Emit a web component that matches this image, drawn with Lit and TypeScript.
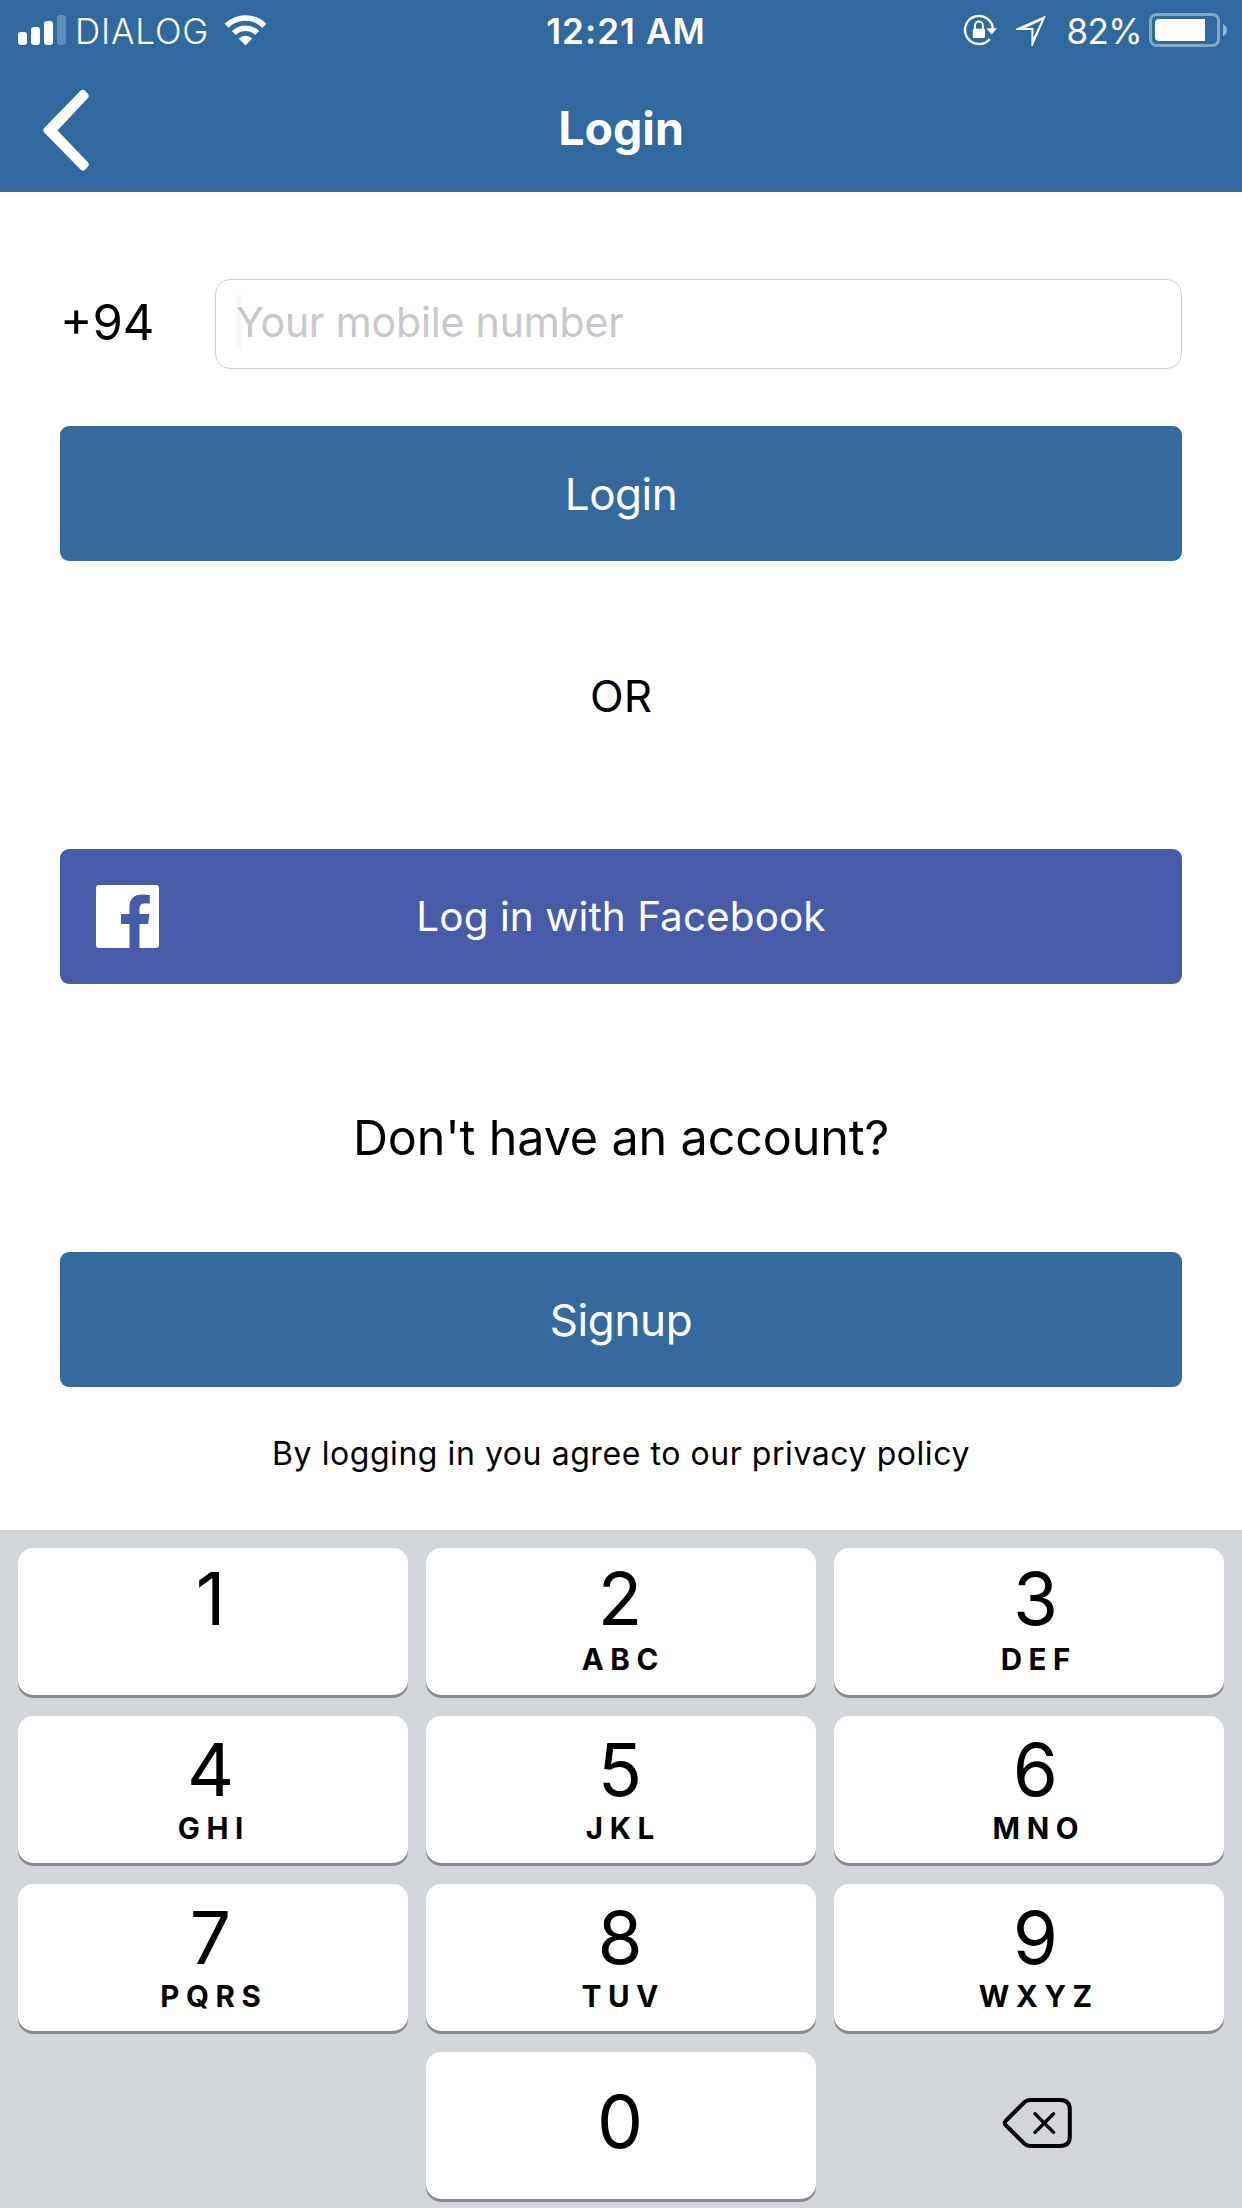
import { LitElement, html, css, svg, nothing } from "lit";
import { customElement } from "lit/decorators.js";

interface Key {
  digit: string;
  letters: string;
}

const KEYS: Key[] = [
  { digit: "1", letters: "" },
  { digit: "2", letters: "ABC" },
  { digit: "3", letters: "DEF" },
  { digit: "4", letters: "GHI" },
  { digit: "5", letters: "JKL" },
  { digit: "6", letters: "MNO" },
  { digit: "7", letters: "PQRS" },
  { digit: "8", letters: "TUV" },
  { digit: "9", letters: "WXYZ" },
];

@customElement("status-bar")
class StatusBar extends LitElement {
  static styles = css`
    :host { display: block; height: 63px; color: #fff; font-size: 35px; line-height: 63px; }
    .bar { display: grid; grid-template-columns: 1fr auto 1fr; height: 63px; }
    .side { display: flex; align-items: flex-start; }
    .left { padding-left: 18px; }
    .right { justify-content: flex-end; padding-right: 15px; }
    .signal { margin-top: 15px; margin-right: 9px; }
    .carrier { font-weight: 300; letter-spacing: 0.8px; }
    .wifi { margin-top: 14px; margin-left: 15px; }
    .time { font-weight: 600; letter-spacing: 1.1px; margin-left: 10px; }
    .lock { margin-top: 14px; margin-right: 18px; }
    .arrow { margin-top: 15px; margin-right: 19px; }
    .percent { letter-spacing: -0.6px; }
    .battery { margin-top: 13px; margin-left: 7px; }
    svg { display: block; flex: none; }
  `;

  render() {
    return html`
      <div class="bar">
        <div class="side left">
          <svg class="signal" width="48" height="30" viewBox="0 0 48 30" fill="#fff">
            <rect x="0" y="17" width="9" height="13" rx="3" />
            <rect x="13" y="12" width="9" height="18" rx="3" />
            <rect x="26" y="6" width="9" height="24" rx="3" />
            <rect x="39" y="0" width="9" height="30" rx="3" fill="#6090b9" />
          </svg>
          <span class="carrier">DIALOG</span>
          <svg class="wifi" width="43" height="32" viewBox="0 0 43 32">
            <g fill="none" stroke="#fff" stroke-width="5.6">
              <path d="M2.6 11.7A27 27 0 0 1 40.4 11.7" />
              <path d="M9.8 19A16.6 16.6 0 0 1 33.2 19" />
            </g>
            <path d="M14.7 24.6Q21.5 18.9 28.3 24.6L21.5 31.4Z" fill="#fff" />
          </svg>
        </div>
        <span class="time">12:21 AM</span>
        <div class="side right">
          <svg class="lock" width="35" height="32" viewBox="0 0 35 32">
            <path d="M30 16.5A14 14 0 1 0 26.8 24.9" fill="none" stroke="#fff" stroke-width="2.3" />
            <path d="M23.4 14.2H34L28.7 20.6Z" fill="#fff" />
            <rect x="9.8" y="14.8" width="12.2" height="9.2" rx="1.2" fill="#fff" />
            <path d="M11.9 15.5V11.6a4 4 0 0 1 8 0V15.5" fill="none" stroke="#fff" stroke-width="2" />
          </svg>
          <svg class="arrow" width="31" height="32" viewBox="0 0 31 32">
            <path d="M0 13.8L30 .6L16.6 31H15.4V15L0 14.9ZM9.2 13H17.4V23.2L25.8 5.2Z" fill="#fff" fill-rule="evenodd" />
          </svg>
          <span class="percent">82%</span>
          <svg class="battery" width="78" height="34" viewBox="0 0 78 34">
            <rect x="1.5" y="1.5" width="68" height="31" rx="6" fill="none" stroke="#82a8c8" stroke-width="3" />
            <path d="M10 6H56V28H10Q6 28 6 24V10Q6 6 10 6Z" fill="#fff" />
            <path d="M74 11Q78 13 78 17T74 23Z" fill="#97b5d0" />
          </svg>
        </div>
      </div>
    `;
  }
}

@customElement("number-pad")
class NumberPad extends LitElement {
  static styles = css`
    :host { display: block; height: 678px; background: #d2d5da; color: #000; }
    .pad { display: grid; grid-template-columns: repeat(3, 390px); grid-auto-rows: 147px; gap: 21px 18px; padding: 18px; }
    .key { display: flex; flex-direction: column; align-items: center; border-radius: 15px; background: #fff; box-shadow: 0 3px 0 #898a8f; box-sizing: border-box; padding: 16px 2px 0 0; }
    .col-0 { padding-right: 5px; }
    .col-2 { padding-right: 0; padding-left: 13px; }
    .first { padding-top: 13px; }
    .zero { grid-column: 2; padding-top: 32px; }
    .digit { font-size: 73px; line-height: 75px; height: 75px; }
    .letters { font-size: 29.5px; line-height: 36px; font-weight: 700; letter-spacing: 6.6px; margin-right: -6.6px; margin-top: 3px; }
    .first .letters { margin-top: 5px; }
    .delete { display: flex; align-items: center; justify-content: center; padding-left: 15px; padding-bottom: 6px; }
  `;

  private key(k: Key, index: number) {
    return html`
      <div class="key col-${index % 3} ${index < 3 ? "first" : ""}">
        <span class="digit">${k.digit}</span>
        ${k.letters ? html`<span class="letters">${k.letters}</span>` : nothing}
      </div>
    `;
  }

  render() {
    return html`
      <div class="pad">
        ${KEYS.map((k, i) => this.key(k, i))}
        <div class="key zero"><span class="digit">0</span></div>
        <div class="delete">
          <svg width="70" height="52" viewBox="0 0 70 52" fill="none" stroke="#000" stroke-linejoin="round" stroke-linecap="round">
            <path d="M28 3H58Q67.8 3 67.8 12.5V39.5Q67.8 49 58 49H28Q24.8 49 22.5 46.8L3.6 28Q1.8 26 3.6 24L22.5 5.2Q24.8 3 28 3Z" stroke-width="4" />
            <path d="M33 16.8L51.6 35.4M51.6 16.8L33 35.4" stroke-width="3.4" />
          </svg>
        </div>
      </div>
    `;
  }
}

@customElement("app-root")
class AppRoot extends LitElement {
  static styles = css`
    :host { display: block; width: 1242px; height: 2208px; overflow: hidden; background: #fff; color: #000; font-family: Inter, "Liberation Sans", sans-serif; }
    .header { height: 192px; background: #30699f; }
    .nav { display: grid; grid-template-columns: 1fr auto 1fr; height: 129px; color: #fff; }
    .back { display: block; margin-left: 42px; margin-top: 26px; }
    .title { font-size: 46.5px; font-weight: 700; line-height: 56px; margin-top: 37px; }
    .form { display: flex; flex-direction: column; height: 1338px; padding: 87px 60px 0; box-sizing: border-box; }
    .phone { display: flex; height: 90px; }
    .code { width: 155px; box-sizing: border-box; font-size: 49px; line-height: 88px; }
    .field { flex: 1; display: flex; box-sizing: border-box; border: 1px solid #ccc; border-radius: 15px; padding-left: 20px; }
    .cursor { width: 6px; height: 56px; margin-top: 14px; border-radius: 3px; background: #f7f9fe; }
    .placeholder { margin-left: -6px; font-size: 41px; line-height: 85px; letter-spacing: -0.15px; color: #c7c7cc; }
    .button { display: flex; align-items: center; justify-content: center; height: 135px; border-radius: 9px; background: #356a9f; color: #fff; font-size: 44px; letter-spacing: -0.5px; }
    .login { margin-top: 57px; }
    .or { align-self: center; margin-top: 107px; height: 56px; font-size: 44px; line-height: 56px; }
    .facebook { display: grid; grid-template-columns: 1fr auto 1fr; margin-top: 125px; background: #465ca8; font-size: 40.5px; letter-spacing: 0.06px; }
    .logo { display: block; margin-left: 36px; }
    .question { align-self: center; margin-top: 124px; height: 60px; font-size: 48.5px; line-height: 60px; letter-spacing: -0.15px; }
    .signup { margin-top: 84px; letter-spacing: -0.35px; }
    .policy { align-self: center; margin-top: 47px; font-size: 32px; line-height: 40px; letter-spacing: 0.56px; }
  `;

  private logo = svg`
    <path fill-rule="evenodd" d="M3 0H60Q63 0 63 3V60Q63 63 60 63H43.5V39H52L53.5 29H43.5V23Q43.5 18.5 48.5 18.5H53.8V10Q50.5 9.4 46.5 9.4Q33.5 9.4 33.5 22V29H25V39H33.5V63H3Q0 63 0 60V3Q0 0 3 0Z" fill="#fff" />
  `;

  render() {
    return html`
      <div class="header">
        <status-bar></status-bar>
        <div class="nav">
          <svg class="back" width="48" height="84" viewBox="0 0 48 84">
            <path d="M38.5 1.8Q41 -.3 43.3 2L45.7 4.8Q47.8 7 45.7 9.3L15.5 41.5L45.7 73Q47.8 75.4 45.7 77.8L43.3 80.5Q41 82.8 38.5 80.5L2.2 43.5Q.4 41.3 2.2 39Z" fill="#fff" />
          </svg>
          <span class="title">Login</span>
        </div>
      </div>
      <div class="form">
        <div class="phone">
          <span class="code">+94</span>
          <div class="field">
            <span class="cursor"></span>
            <span class="placeholder">Your mobile number</span>
          </div>
        </div>
        <div class="button login"><span>Login</span></div>
        <div class="or">OR</div>
        <div class="button facebook">
          <svg class="logo" width="63" height="63" viewBox="0 0 63 63">${this.logo}</svg>
          <span>Log in with Facebook</span>
        </div>
        <div class="question">Don't have an account?</div>
        <div class="button signup"><span>Signup</span></div>
        <div class="policy">By logging in you agree to our privacy policy</div>
      </div>
      <number-pad></number-pad>
    `;
  }
}
